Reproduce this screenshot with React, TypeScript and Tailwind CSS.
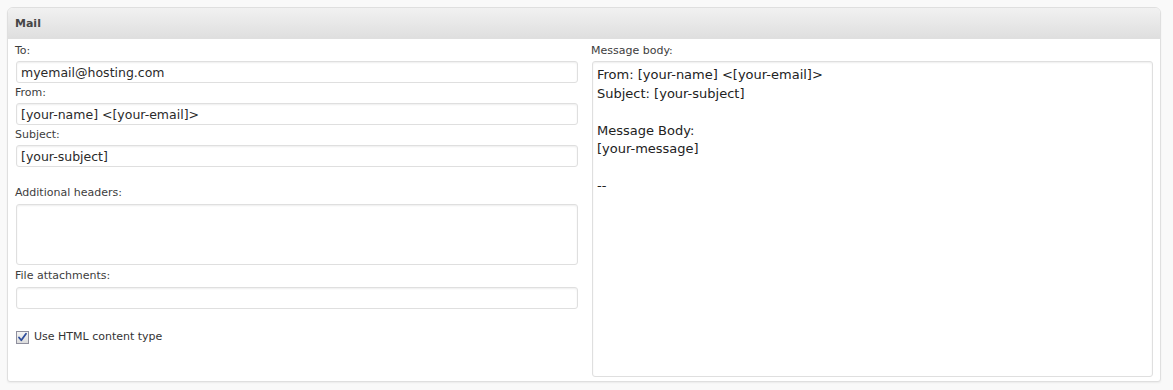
import React from "react";

const font = { fontFamily: '"DejaVu Sans", Verdana, sans-serif' };

function Label({ children, className = "" }: { children: React.ReactNode; className?: string }) {
  return (
    <div className={`text-[11px] leading-[14px] text-[#3d3d3d] ${className}`}>{children}</div>
  );
}

function Field({ value, className = "" }: { value?: string; className?: string }) {
  return (
    <div
      className={`ml-[1px] h-[22px] rounded-[3px] border border-[#dfdfdf] bg-white px-[4px] pt-[1px] text-[12.5px] leading-[20px] text-[#2a2a2a] shadow-[inset_0_1px_2px_rgba(0,0,0,0.07)] whitespace-pre ${className}`}
    >
      {value}
    </div>
  );
}

export default function App() {
  const body = `From: [your-name] <[your-email]>
Subject: [your-subject]

Message Body:
[your-message]

--`;
  return (
    <div className="min-h-[390px] w-[1173px] bg-[#f9f9f9] pt-[7px] pl-[7px]" style={font}>
      <div className="w-[1154px] h-[375px] rounded-t-[6px] rounded-b-[3px] border border-[#dfdfdf] bg-white shadow-[0_1px_2px_rgba(0,0,0,0.06)]">
        <div className="h-[31px] rounded-t-[5px] border-b border-[#dfdfdf] bg-gradient-to-b from-[#f1f1f1] to-[#dfdfdf] px-[7px] text-[11px] font-bold leading-[31px] text-[#464646]">
          Mail
        </div>
        <div className="flex gap-[13px] pl-[7px] pt-[5px]">
          <div className="flex w-[563px] flex-col">
            <Label className="mb-[3px]">To:</Label>
            <Field value="myemail@hosting.com" />
            <Label className="mt-[3px] mb-[3px]">From:</Label>
            <Field value="[your-name] <[your-email]>" />
            <Label className="mt-[3px] mb-[3px]">Subject:</Label>
            <Field value="[your-subject]" />
            <Label className="mt-[19px] mb-[4px]">Additional headers:</Label>
            <Field className="h-[61px]" />
            <Label className="mt-[4px] mb-[4px]">File attachments:</Label>
            <Field />
            <div className="mt-[21px] ml-[1px] flex items-center gap-[5px]">
              <div className="flex h-[13px] w-[13px] items-center justify-center border border-[#8f8f9d] bg-gradient-to-b from-[#f4f4f4] to-[#dcdcdc]">
                <svg width="11" height="11" viewBox="0 0 11 11">
                  <path d="M2 5.5 L4.3 8.3 L9 1.8" fill="none" stroke="#2e4d9c" strokeWidth="1.8" strokeLinecap="round" strokeLinejoin="round" />
                </svg>
              </div>
              <span className="text-[11px] leading-[14px] text-[#333]">Use HTML content type</span>
            </div>
          </div>
          <div className="flex w-[562px] flex-col">
            <Label className="mb-[3px]">Message body:</Label>
            <div className="ml-[1px] h-[316px] rounded-[3px] border border-[#dfdfdf] bg-white px-[4px] pt-[4px] text-[13px] leading-[18.5px] text-[#222] whitespace-pre shadow-[inset_0_1px_2px_rgba(0,0,0,0.07)]">
              {body}
            </div>
          </div>
        </div>
      </div>
    </div>
  );
}
